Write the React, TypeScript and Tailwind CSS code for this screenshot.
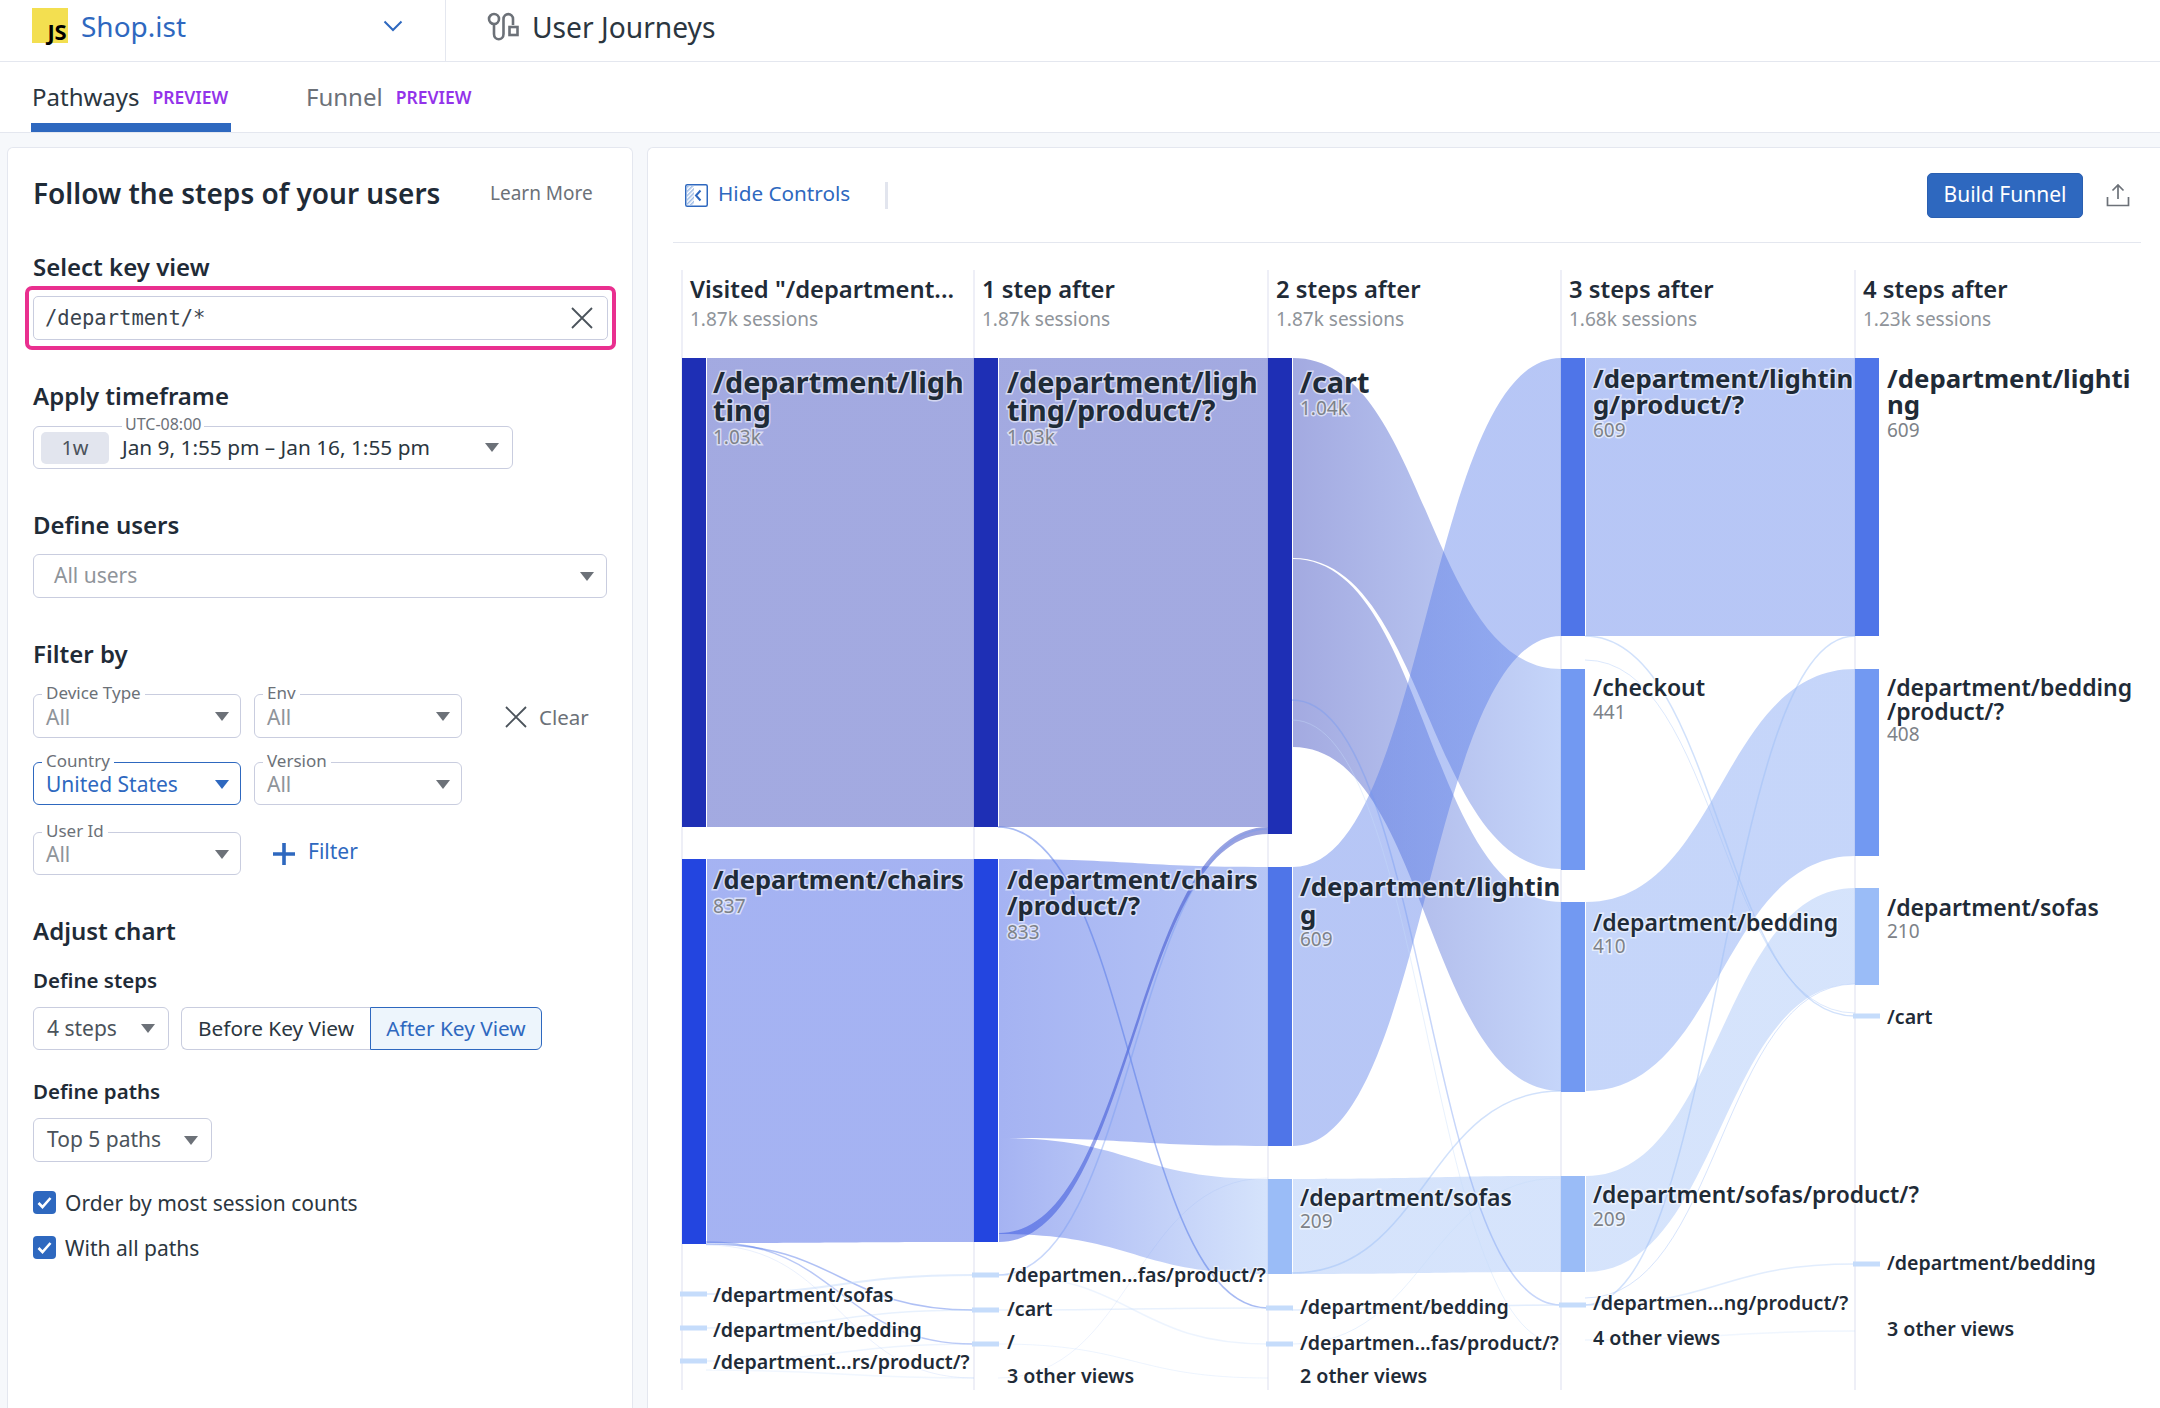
import type { ReactNode } from "react";

const FONT = "font-['Noto_Sans',sans-serif]";

function Caret({ className = "text-[#6c7178]" }: { className?: string }) {
  return (
    <svg width="14" height="9" viewBox="0 0 14 9" className={`shrink-0 ${className}`}>
      <path d="M0 0h14L7 9z" fill="currentColor" />
    </svg>
  );
}

function CloseGlyph() {
  return (
    <svg width="22" height="22" viewBox="0 0 22 22" className="shrink-0 text-[#4b535b]">
      <path d="M1 1l20 20M21 1L1 21" fill="none" stroke="currentColor" strokeWidth="1.8" />
    </svg>
  );
}

function Heading({ children, className = "" }: { children: ReactNode; className?: string }) {
  return (
    <h3 className={`h-[30px] text-[24px] leading-[30px] font-semibold text-[#1f2b37] ${className}`}>
      {children}
    </h3>
  );
}

function SubHeading({ children, className = "" }: { children: ReactNode; className?: string }) {
  return (
    <h4 className={`h-[28px] text-[20.5px] leading-[28px] font-semibold text-[#1f2b37] ${className}`}>
      {children}
    </h4>
  );
}

function Facet({
  label,
  value,
  active = false,
  className = "",
}: {
  label: string;
  value: string;
  active?: boolean;
  className?: string;
}) {
  return (
    <div
      className={`relative flex w-[208px] items-center justify-between rounded-[6px] border pt-[1px] pr-[11px] pl-[12px] ${
        active ? "border-[#2e68bf]" : "border-[#c9cddf]"
      } ${className}`}
    >
      <span className="absolute -top-[13px] left-[8px] bg-white px-[4px] text-[17px] leading-[22px] text-[#6c7178]">
        {label}
      </span>
      <span className={`text-[21px] leading-[28px] ${active ? "text-[#2e68bf]" : "text-[#8f949a]"}`}>{value}</span>
      <Caret className={active ? "text-[#2e68bf]" : "text-[#6c7178]"} />
    </div>
  );
}

function Check({ label, className = "" }: { label: string; className?: string }) {
  return (
    <label className={`flex h-[23px] items-center gap-[9px] ${className}`}>
      <span className="flex size-[23px] items-center justify-center rounded-[4px] bg-[#2e68bf]">
        <svg width="15" height="13" viewBox="0 0 15 13">
          <path d="M1.5 7l4 4 8-9" fill="none" stroke="#fff" strokeWidth="2.6" />
        </svg>
      </span>
      <span className="text-[21px] leading-[28px] text-[#2b3640]">{label}</span>
    </label>
  );
}

function ControlsPanel() {
  return (
    <aside className="h-full w-[626px] shrink-0 rounded-t-[6px] border border-b-0 border-[#e4e7ef] bg-white pt-[25px] pl-[25px]">
      <div className="flex h-[40px] items-center">
        <h2 className="w-[457px] text-[28px] leading-[40px] font-semibold text-[#1f2b37]">
          Follow the steps of your users
        </h2>
        <span className="text-[19px] text-[#6c7178]">Learn More</span>
      </div>

      <Heading className="mt-[39px]">Select key view</Heading>
      <div className="mt-[4px] -ml-[8px] h-[64px] w-[591px] rounded-[7px] border-[4px] border-[#e92f8f] p-[6px_4px]">
        <div className="flex h-[44px] items-center justify-between rounded-[5px] border border-[#c9cddf] pr-[14px] pl-[11px]">
          <span className="pt-[1px] font-['DejaVu_Sans_Mono',monospace] text-[20.5px] text-[#3a444e]">/department/*</span>
          <CloseGlyph />
        </div>
      </div>

      <Heading className="mt-[31px]">Apply timeframe</Heading>
      <div className="relative mt-[15px] flex h-[43px] w-[480px] items-center rounded-[6px] border border-[#c9cddf] pr-[13px] pl-[7px]">
        <span className="absolute -top-[14px] left-[88px] bg-white px-[3px] text-[16px] leading-[22px] text-[#6c7178]">
          UTC-08:00
        </span>
        <span className="flex h-[32px] w-[68px] items-center justify-center rounded-[5px] bg-[#e2e5ee] text-[20px] text-[#4b535b]">
          1w
        </span>
        <span className="ml-[13px] flex-1 text-[20.8px] text-[#2b3640]">Jan 9, 1:55 pm – Jan 16, 1:55 pm</span>
        <Caret />
      </div>

      <Heading className="mt-[41px]">Define users</Heading>
      <div className="mt-[14px] flex h-[44px] w-[574px] items-center justify-between rounded-[6px] border border-[#c9cddf] pr-[12px] pl-[20px]">
        <span className="text-[21px] text-[#8f949a]">All users</span>
        <Caret />
      </div>

      <Heading className="mt-[41px]">Filter by</Heading>
      <div className="mt-[25px] flex items-center gap-[13px]">
        <Facet label="Device Type" value="All" className="h-[44px]" />
        <Facet label="Env" value="All" className="h-[44px]" />
        <div className="ml-[30px] flex items-center gap-[12px] pt-[2px] text-[#6c7178]">
          <CloseGlyph />
          <span className="text-[20.5px]">Clear</span>
        </div>
      </div>
      <div className="mt-[24px] flex items-center gap-[13px]">
        <Facet label="Country" value="United States" active className="h-[43px]" />
        <Facet label="Version" value="All" className="h-[43px]" />
      </div>
      <div className="mt-[27px] flex items-center">
        <Facet label="User Id" value="All" className="h-[43px]" />
        <svg width="22" height="22" viewBox="0 0 22 22" className="ml-[32px] shrink-0">
          <path d="M11 0v22M0 11h22" fill="none" stroke="#2e68bf" strokeWidth="3.6" />
        </svg>
        <span className="ml-[13px] pb-[3px] text-[21px] text-[#2e68bf]">Filter</span>
      </div>

      <Heading className="mt-[41px]">Adjust chart</Heading>
      <SubHeading className="mt-[20px]">Define steps</SubHeading>
      <div className="mt-[13px] flex h-[43px]">
        <div className="flex w-[136px] items-center justify-between rounded-[6px] border border-[#c9cddf] pr-[13px] pl-[13px]">
          <span className="text-[21px] text-[#4b535b]">4 steps</span>
          <Caret />
        </div>
        <div className="ml-[12px] flex">
          <span className="flex w-[189px] items-center justify-center rounded-l-[6px] border border-r-0 border-[#c9cddf] text-[20.8px] text-[#2b3640]">
            Before Key View
          </span>
          <span className="flex w-[172px] items-center justify-center rounded-r-[6px] border border-[#2e68bf] bg-[#edf5fc] text-[20.8px] text-[#2e68bf]">
            After Key View
          </span>
        </div>
      </div>

      <SubHeading className="mt-[27px]">Define paths</SubHeading>
      <div className="mt-[13px] flex h-[44px] w-[179px] items-center justify-between rounded-[6px] border border-[#c9cddf] pr-[13px] pl-[13px]">
        <span className="text-[21px] text-[#4b535b]">Top 5 paths</span>
        <Caret />
      </div>

      <Check label="Order by most session counts" className="mt-[29px]" />
      <Check label="With all paths" className="mt-[22px]" />
    </aside>
  );
}

const COLS = [682, 974, 1268, 1561, 1855];
const NODE_W = 24;

const C = {
  navy: "#1e2fb5",
  royal: "#2345e0",
  blue: "#4f75e8",
  mid: "#7299f2",
  soft: "#9abcf7",
  pale: "#c5dcfb",
};

// link between two columns; y values are top/bottom at each end
type Flow = { from: number; y0: number; y1: number; y2: number; y3: number; c0: string; c1: string; o?: number };

const flows: Flow[] = [
  { from: 0, y0: 358, y1: 827, y2: 358, y3: 827, c0: C.navy, c1: C.navy },
  { from: 0, y0: 859, y1: 1243, y2: 859, y3: 1242, c0: C.royal, c1: C.royal },
  { from: 1, y0: 358, y1: 827, y2: 358, y3: 827, c0: C.navy, c1: C.navy },
  { from: 1, y0: 859, y1: 1138, y2: 867, y3: 1146, c0: C.royal, c1: C.blue },
  { from: 1, y0: 1138, y1: 1234, y2: 1179, y3: 1274, c0: C.royal, c1: C.soft },
  { from: 1, y0: 1233, y1: 1242, y2: 827, y3: 834, c0: C.royal, c1: C.navy, o: 0.45 },
  { from: 2, y0: 358, y1: 558, y2: 669, y3: 869, c0: C.navy, c1: C.mid },
  { from: 2, y0: 559, y1: 747, y2: 902, y3: 1091, c0: C.navy, c1: C.mid },
  { from: 2, y0: 867, y1: 1146, y2: 358, y3: 636, c0: C.blue, c1: C.blue },
  { from: 2, y0: 1179, y1: 1274, y2: 1176, y3: 1272, c0: C.soft, c1: C.soft },
  { from: 3, y0: 358, y1: 636, y2: 358, y3: 636, c0: C.blue, c1: C.blue },
  { from: 3, y0: 902, y1: 1091, y2: 669, y3: 856, c0: C.mid, c1: C.mid },
  { from: 3, y0: 1176, y1: 1272, y2: 888, y3: 984, c0: C.soft, c1: C.soft },
];

// thin strands: from column, start y, end y, colour, stroke width, opacity
const strands: [number, number, number, string, number, number][] = [
  [0, 1244, 1310, C.blue, 1.5, 0.45],
  [0, 1242, 1344, C.blue, 1.5, 0.4],
  [0, 1245, 1378, C.mid, 1, 0.15],
  [0, 1294, 1275, C.pale, 2, 0.5],
  [0, 1328, 1310, C.pale, 1.5, 0.4],
  [0, 1361, 1344, C.pale, 1.5, 0.3],
  [0, 1370, 1378, C.pale, 1.5, 0.25],
  [1, 827, 1308, C.blue, 1.5, 0.5],
  [1, 1275, 829, C.mid, 1.5, 0.4],
  [1, 1275, 1344, C.pale, 1.5, 0.3],
  [1, 1310, 1308, C.pale, 1.5, 0.4],
  [1, 1344, 1378, C.pale, 1, 0.3],
  [1, 1378, 1178, C.mid, 1, 0.12],
  [2, 700, 1305, C.mid, 1.5, 0.4],
  [2, 720, 1344, C.pale, 1, 0.4],
  [2, 1273, 1091, C.soft, 1.5, 0.45],
  [2, 1310, 1305, C.pale, 1.5, 0.5],
  [2, 1344, 1178, C.pale, 1, 0.4],
  [3, 636, 1016, C.soft, 1.5, 0.45],
  [3, 660, 1013, C.soft, 1, 0.35],
  [3, 1305, 636, C.soft, 1.5, 0.45],
  [3, 1298, 984, C.soft, 1, 0.4],
  [3, 1305, 1264, C.pale, 1.5, 0.5],
  [3, 1340, 1331, C.pale, 1.5, 0.25],
];

const nodes: [number, number, number, string][] = [
  [0, 358, 827, C.navy],
  [0, 859, 1244, C.royal],
  [1, 358, 827, C.navy],
  [1, 859, 1242, C.royal],
  [2, 358, 834, C.navy],
  [2, 867, 1146, C.blue],
  [2, 1179, 1274, C.soft],
  [3, 358, 636, C.blue],
  [3, 669, 870, C.mid],
  [3, 902, 1092, C.mid],
  [3, 1176, 1272, C.soft],
  [4, 358, 636, C.blue],
  [4, 669, 856, C.mid],
  [4, 888, 985, C.soft],
];

const ticks: [number, number][] = [
  [0, 1294],
  [0, 1328],
  [0, 1361],
  [1, 1275],
  [1, 1310],
  [1, 1344],
  [2, 1308],
  [2, 1344],
  [3, 1305],
  [4, 1016],
  [4, 1264],
];

const headers = [
  ['Visited "/department...', "1.87k sessions"],
  ["1 step after", "1.87k sessions"],
  ["2 steps after", "1.87k sessions"],
  ["3 steps after", "1.68k sessions"],
  ["4 steps after", "1.23k sessions"],
];

// x, lines with their y, font size, count text with its y, white halo
const labels: {
  x: number;
  lines: [string, number][];
  size: number;
  weight?: number;
  count?: [string, number];
  halo?: boolean;
}[] = [
  { x: 713, lines: [["/department/ligh", 381], ["ting", 409]], size: 28.8, weight: 700, count: ["1.03k", 437], halo: true },
  { x: 1007, lines: [["/department/ligh", 381], ["ting/product/?", 409]], size: 28.8, weight: 700, count: ["1.03k", 437], halo: true },
  { x: 1300, lines: [["/cart", 381]], size: 28.8, weight: 700, count: ["1.04k", 408], halo: true },
  { x: 1593, lines: [["/department/lightin", 378], ["g/product/?", 404]], size: 25.8, weight: 700, count: ["609", 430], halo: true },
  { x: 1887, lines: [["/department/lighti", 378], ["ng", 404]], size: 25.8, weight: 700, count: ["609", 430] },
  { x: 713, lines: [["/department/chairs", 879]], size: 25.5, weight: 700, count: ["837", 906], halo: true },
  { x: 1007, lines: [["/department/chairs", 879], ["/product/?", 905]], size: 25.5, weight: 700, count: ["833", 932], halo: true },
  { x: 1300, lines: [["/department/lightin", 886], ["g", 914]], size: 25.8, weight: 700, count: ["609", 939], halo: true },
  { x: 1300, lines: [["/department/sofas", 1197]], size: 23, count: ["209", 1221], halo: true },
  { x: 1593, lines: [["/checkout", 687]], size: 23, count: ["441", 712], halo: true },
  { x: 1593, lines: [["/department/bedding", 922]], size: 23, count: ["410", 946], halo: true },
  { x: 1593, lines: [["/department/sofas/product/?", 1194]], size: 22.8, count: ["209", 1219], halo: true },
  { x: 1887, lines: [["/department/bedding", 687], ["/product/?", 711]], size: 23, count: ["408", 734] },
  { x: 1887, lines: [["/department/sofas", 907]], size: 23, count: ["210", 931] },
];

const smallLabels: [number, number, string][] = [
  [713, 1294, "/department/sofas"],
  [713, 1329, "/department/bedding"],
  [713, 1361, "/department...rs/product/?"],
  [1007, 1274, "/departmen...fas/product/?"],
  [1007, 1308, "/cart"],
  [1007, 1341, "/"],
  [1007, 1375, "3 other views"],
  [1300, 1306, "/department/bedding"],
  [1300, 1342, "/departmen...fas/product/?"],
  [1300, 1375, "2 other views"],
  [1593, 1302, "/departmen...ng/product/?"],
  [1593, 1337, "4 other views"],
  [1887, 1016, "/cart"],
  [1887, 1262, "/department/bedding"],
  [1887, 1328, "3 other views"],
];

function flowPath(f: Flow) {
  const a = COLS[f.from] + NODE_W + 1;
  const b = COLS[f.from + 1];
  const m = (a + b) / 2;
  return `M${a} ${f.y0}C${m} ${f.y0} ${m} ${f.y2} ${b} ${f.y2}L${b} ${f.y3}C${m} ${f.y3} ${m} ${f.y1} ${a} ${f.y1}Z`;
}

function PathwayChart() {
  return (
    <svg viewBox="648 243 1512 1165" width="1512" height="1165" className="block">
      <defs>
        {flows.map((f, i) => (
          <linearGradient
            key={i}
            id={`flow-${i}`}
            gradientUnits="userSpaceOnUse"
            x1={COLS[f.from] + NODE_W}
            x2={COLS[f.from + 1]}
            y1="0"
            y2="0"
          >
            <stop offset="0" stopColor={f.c0} />
            <stop offset="1" stopColor={f.c1} />
          </linearGradient>
        ))}
      </defs>

      {COLS.map((x) => (
        <line key={x} x1={x} x2={x} y1="270" y2="1390" stroke="#e8eaf4" strokeWidth="1.5" />
      ))}

      {flows.map((f, i) => (
        <path key={i} d={flowPath(f)} fill={`url(#flow-${i})`} opacity={f.o ?? 0.41} />
      ))}

      {strands.map(([col, y0, y1, color, w, o], i) => {
        const a = COLS[col] + NODE_W;
        const b = COLS[col + 1];
        const m = (a + b) / 2;
        return (
          <path
            key={i}
            d={`M${a} ${y0}C${m} ${y0} ${m} ${y1} ${b} ${y1}`}
            fill="none"
            stroke={color}
            strokeWidth={w}
            opacity={o}
          />
        );
      })}

      {nodes.map(([col, y0, y1, color], i) => (
        <rect key={i} x={COLS[col]} y={y0} width={NODE_W} height={y1 - y0} fill={color} />
      ))}
      {ticks.map(([col, y], i) => (
        <rect key={i} x={COLS[col] - 2} y={y - 2.5} width={NODE_W + 3} height="5" fill={C.pale} />
      ))}

      {headers.map(([title, sub], i) => (
        <g key={i}>
          <text x={COLS[i] + 8} y="289" dominantBaseline="central" fontSize="23.8" fontWeight="600" fill="#1f2b37">
            {title}
          </text>
          <text x={COLS[i] + 8} y="319" dominantBaseline="central" fontSize="19" fill="#8f949a">
            {sub}
          </text>
        </g>
      ))}

      {labels.map((l, i) => (
        <g key={i}>
          {l.lines.map(([t, y]) => (
            <text
              key={t}
              x={l.x}
              y={y}
              dominantBaseline="central"
              fontSize={l.size}
              fontWeight={l.weight ?? 600}
              fill="#1f2b37"
              stroke={l.halo ? "rgba(255,255,255,0.55)" : "none"}
              strokeWidth="3"
              paintOrder="stroke"
            >
              {t}
            </text>
          ))}
          {l.count ? (
            <text
              x={l.x}
              y={l.count[1]}
              dominantBaseline="central"
              fontSize="19"
              fill="#7d8288"
              stroke={l.halo ? "rgba(255,255,255,0.6)" : "none"}
              strokeWidth="3"
              paintOrder="stroke"
            >
              {l.count[0]}
            </text>
          ) : null}
        </g>
      ))}

      {smallLabels.map(([x, y, t]) => (
        <text
          key={`${x}-${y}`}
          x={x}
          y={y}
          dominantBaseline="central"
          fontSize="19.6"
          fontWeight="600"
          fill="#1f2b37"
          stroke="rgba(255,255,255,0.6)"
          strokeWidth="2.5"
          paintOrder="stroke"
        >
          {t}
        </text>
      ))}
    </svg>
  );
}

function ChartPanel() {
  return (
    <main className="ml-[14px] h-full min-w-0 flex-1 overflow-hidden rounded-tl-[6px] border-t border-l border-[#e4e7ef] bg-white">
      <div className="mr-[19px] ml-[25px] flex h-[95px] items-center border-b border-[#e4e7ef] pl-[12px]">
        <svg width="23" height="23" viewBox="0 0 23 23" className="shrink-0">
          <defs>
            <pattern id="hatch" width="3" height="3" patternUnits="userSpaceOnUse" patternTransform="rotate(45)">
              <rect width="1.5" height="3" fill="#9dbbe6" />
            </pattern>
          </defs>
          <rect x="0.75" y="0.75" width="21.5" height="21.5" rx="1.5" fill="#fff" stroke="#2e68bf" strokeWidth="1.5" />
          <rect x="1.5" y="1.5" width="7.5" height="20" fill="url(#hatch)" />
          <path d="M15.5 6.5L11 11.5l4.5 5" fill="none" stroke="#2e68bf" strokeWidth="2" />
        </svg>
        <span className="ml-[10px] pb-[2px] text-[20.7px] text-[#2e68bf]">Hide Controls</span>
        <span className="ml-[35px] h-[27px] w-[2.5px] bg-[#e2e5ee]" />
        <button className="ml-auto h-[45px] w-[156px] rounded-[5px] border border-[#2a5fb0] bg-[#2e68bf] text-[21px] text-white">
          Build Funnel
        </button>
        <svg width="24" height="24" viewBox="0 0 24 24" className="mr-[11px] ml-[23px] shrink-0">
          <path
            d="M12 16V2M6.5 7.5L12 2l5.5 5.5M1.5 14v8.5h21V14"
            fill="none"
            stroke="#6c7178"
            strokeWidth="1.7"
          />
        </svg>
      </div>
      <PathwayChart />
    </main>
  );
}

export default function App() {
  return (
    <div className={`flex h-[1408px] w-[2160px] flex-col overflow-hidden bg-[#f6f8fb] ${FONT}`}>
      <header className="flex h-[62px] shrink-0 border-b border-[#e4e7ef] bg-white">
        <div className="flex w-[446px] items-center border-r border-[#e4e7ef] pb-[10px] pl-[32px]">
          <span className="flex h-[35px] w-[36px] items-end justify-end bg-[#f3df50] pr-[2px] pb-[2px] text-[22px] leading-[20px] font-bold tracking-[-0.5px] text-black">
            JS
          </span>
          <span className="ml-[13px] text-[28px] text-[#2e68bf]">Shop.ist</span>
          <svg width="20" height="12" viewBox="0 0 20 12" className="mr-[42px] ml-auto">
            <path d="M1.5 1.5L10 10l8.5-8.5" fill="none" stroke="#2e68bf" strokeWidth="2" />
          </svg>
        </div>
        <div className="flex items-center pb-[7px] pl-[41px]">
          <svg width="33" height="30" viewBox="0 0 33 30" className="shrink-0">
            <g fill="none" stroke="#6c7178" strokeWidth="2.6">
              <circle cx="7" cy="7" r="5" />
              <path d="M7 12v10c0 7 9.5 7 9.5 0V7c0-6.5 9.5-6.5 9.5 0v6" />
              <rect x="22.5" y="15" width="8" height="8" />
            </g>
          </svg>
          <span className="ml-[12px] text-[28.2px] text-[#2b3640]">User Journeys</span>
        </div>
      </header>

      <nav className="flex h-[71px] shrink-0 items-stretch border-b border-[#e4e7ef] bg-white pl-[31px]">
        <div className="flex w-[200px] items-center border-b-[9px] border-[#2e68bf] pt-[9px] pl-[1px]">
          <span className="text-[24px] text-[#2b3640]">Pathways</span>
          <span className="ml-[13px] text-[17.5px] font-semibold text-[#9333ea]">PREVIEW</span>
        </div>
        <div className="ml-[75px] flex items-center">
          <span className="text-[24px] text-[#6c7178]">Funnel</span>
          <span className="ml-[13px] text-[17.5px] font-semibold text-[#9333ea]">PREVIEW</span>
        </div>
      </nav>

      <div className="flex min-h-0 flex-1 pt-[14px] pl-[7px]">
        <ControlsPanel />
        <ChartPanel />
      </div>
    </div>
  );
}
